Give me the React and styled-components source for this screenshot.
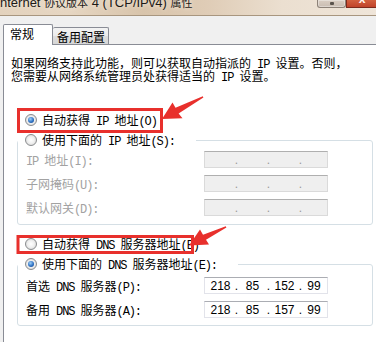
import React from "react";
import styled, { createGlobalStyle } from "styled-components";

const GlobalStyle = createGlobalStyle`
  html, body {
    margin: 0;
    padding: 0;
    background: #f0f0f0;
  }
  body {
    font-family: "Noto Sans CJK SC", "Liberation Sans", sans-serif;
  }
`;

// ASCII runs are drawn in a mono face so they get the half-width look of SimSun
const splitLatin = (text) =>
  text.split(/([\x20-\x7E]+)/).map((part, i) =>
    /[\x20-\x7E]/.test(part) ? <Latin key={i}>{part}</Latin> : part
  );

const RadioButton = ({ checked, children }) => (
  <RadioLabel>
    <RadioCircle checked={checked} />
    <span>{splitLatin(children)}</span>
  </RadioLabel>
);

const IpField = ({ values = ["", "", "", ""], disabled }) => (
  <Field disabled={disabled}>
    {values.map((v, i) => (
      <React.Fragment key={i}>
        {i > 0 && <Dot>.</Dot>}
        <Octet last={i === values.length - 1}>{v}</Octet>
      </React.Fragment>
    ))}
  </Field>
);

const App = () => {
  return (
    <Window>
      <GlobalStyle />
      <TitleBar>
        <Title>
          nternet <Cjk>协议版本</Cjk> 4 (TCP/IPv4) <Cjk>属性</Cjk>
        </Title>
        <Caption>
          <CaptionButton>
            <MaxGlyph />
          </CaptionButton>
          <CloseButton>
            <CloseGlyph>x</CloseGlyph>
          </CloseButton>
        </Caption>
      </TitleBar>

      <TabBar>
        <Tab active>常规</Tab>
        <Tab>备用配置</Tab>
      </TabBar>

      <Panel>
        <Intro>
          <IntroLine>{splitLatin("如果网络支持此功能，则可以获取自动指派的 IP 设置。否则，")}</IntroLine>
          <IntroLine>{splitLatin("您需要从网络系统管理员处获得适当的 IP 设置。")}</IntroLine>
        </Intro>

        <Body>
          <RadioRow first>
            <RadioButton checked>自动获得 IP 地址(O)</RadioButton>
          </RadioRow>

          <Group>
            <Legend width={178}>
              <RadioButton>使用下面的 IP 地址(S):</RadioButton>
            </Legend>
            <FieldGrid top={4} bottom={8}>
              <FieldLabel disabled>{splitLatin("IP 地址(I):")}</FieldLabel>
              <IpField disabled />
              <FieldLabel disabled>{splitLatin("子网掩码(U):")}</FieldLabel>
              <IpField disabled />
              <FieldLabel disabled>{splitLatin("默认网关(D):")}</FieldLabel>
              <IpField disabled />
            </FieldGrid>
          </Group>

          <RadioRow>
            <RadioButton>自动获得 DNS 服务器地址(B)</RadioButton>
          </RadioRow>

          <Group>
            <Legend width={220}>
              <RadioButton checked>使用下面的 DNS 服务器地址(E):</RadioButton>
            </Legend>
            <FieldGrid top={6} bottom={7}>
              <FieldLabel>{splitLatin("首选 DNS 服务器(P):")}</FieldLabel>
              <IpField values={["218", "85", "152", "99"]} />
              <FieldLabel>{splitLatin("备用 DNS 服务器(A):")}</FieldLabel>
              <IpField values={["218", "85", "157", "99"]} />
            </FieldGrid>
          </Group>
        </Body>
      </Panel>

      <Annotations width="376" height="342" viewBox="0 0 376 342">
        <rect x="18.5" y="109.5" width="143" height="22" fill="none" stroke="#e8302c" strokeWidth="3" />
        <polygon
          points="162,119 172.5,102.5 175.5,107.8 202.8,96.2 203.4,97.4 178.6,113.4 182.5,118.3"
          fill="#e8302c"
        />
        <rect x="18" y="236.5" width="174.5" height="16" fill="none" stroke="#e8302c" strokeWidth="3" />
        <polygon
          points="189,245.5 200,229.6 203,234.8 225.8,226.2 226.4,227.4 206,239.8 209,244.6"
          fill="#e8302c"
        />
      </Annotations>
    </Window>
  );
};

export default App;

const Window = styled.div`
  position: relative;
  width: 376px;
  height: 342px;
  overflow: hidden;
  display: flex;
  flex-direction: column;
  background: #f0f0f0;
  font-size: 12px;
  color: #000;
`;

const TitleBar = styled.div`
  flex: none;
  height: 15px;
  display: flex;
  justify-content: space-between;
  align-items: flex-start;
  overflow: hidden;
  border-bottom: 1px solid #a8967f;
  background: linear-gradient(
    90deg,
    #e3d2bd 0%,
    #e6d6c2 18%,
    #d8c4ab 38%,
    #dfccb6 55%,
    #ebdfd0 75%,
    #efe5d9 100%
  );
`;

const Title = styled.div`
  margin-top: -5px;
  font-family: "Liberation Sans", sans-serif;
  font-size: 13px;
  line-height: 16px;
  white-space: nowrap;
  color: #1c1a18;
  text-shadow: 0 0 4px rgba(255, 250, 240, 0.9);
`;

const Cjk = styled.span`
  font-family: "Noto Sans CJK SC", sans-serif;
  font-size: 11px;
  line-height: 0;
`;

const Caption = styled.div`
  display: flex;
  margin-right: -2px;
`;

const CaptionButton = styled.div`
  width: 27px;
  height: 7px;
  display: flex;
  justify-content: center;
  border: 1px solid #8d8278;
  border-top: none;
  border-radius: 0 0 3px 3px;
  background: linear-gradient(#d9cdc2, #c9bdb2);
  box-shadow: inset 0 0 0 1px rgba(255, 255, 255, 0.35);
`;

const MaxGlyph = styled.span`
  width: 4px;
  height: 3px;
  margin-top: 2px;
  background: #5a534d;
  border-radius: 1px;
`;

const CloseButton = styled.div`
  width: 30px;
  height: 7px;
  display: flex;
  justify-content: center;
  overflow: hidden;
  border: 1px solid #7d2a1c;
  border-top: none;
  border-radius: 0 0 3px 0;
  background: linear-gradient(#d2603f, #c0432a);
`;

const CloseGlyph = styled.span`
  margin-top: -8px;
  font-family: "Liberation Sans", sans-serif;
  font-weight: bold;
  font-size: 12px;
  color: #fff3ee;
`;

const TabBar = styled.div`
  flex: none;
  height: 28px;
  display: flex;
  align-items: flex-end;
  padding-left: 3px;
`;

const Tab = styled.div`
  position: relative;
  z-index: 1;
  box-sizing: border-box;
  height: ${(p) => (p.active ? 21 : 17)}px;
  width: ${(p) => (p.active ? 50 : 56)}px;
  margin-bottom: ${(p) => (p.active ? -1 : 0)}px;
  padding: 2px 0 0 ${(p) => (p.active ? 6 : 4)}px;
  line-height: 14px;
  border: 1px solid #898c95;
  border-bottom: none;
  border-left: ${(p) => (p.active ? "1px solid #898c95" : "none")};
  border-radius: 2px 2px 0 0;
  background: ${(p) =>
    p.active
      ? "#ffffff"
      : "linear-gradient(#f3f3f3, #ebebeb 50%, #dedede 51%, #d6d6d6)"};
`;

const Panel = styled.div`
  flex: 1;
  margin: 0 -4px 0 3px;
  padding: 11px 0 0 7px;
  background: #fff;
  border: 1px solid #898c95;
  border-bottom: none;
`;

const Intro = styled.div`
  display: flex;
  flex-direction: column;
`;

const IntroLine = styled.span`
  height: 13px;
  line-height: 13px;
  white-space: nowrap;
`;

const Latin = styled.span`
  font-family: "Liberation Mono", monospace;
  font-size: 12px;
  line-height: 0;
  letter-spacing: -1.1px;
`;

const Body = styled.div`
  margin-left: 6px;
  width: 356px;
  display: flex;
  flex-direction: column;
`;

const RadioRow = styled.div`
  height: 14px;
  margin-top: ${(p) => (p.first ? 31 : 12)}px;
  padding-left: 8px;
  display: flex;
  align-items: center;
`;

const RadioLabel = styled.label`
  display: flex;
  align-items: center;
  gap: 5px;
  height: 14px;
  line-height: 14px;
  white-space: nowrap;
`;

const RadioCircle = styled.span`
  flex: none;
  box-sizing: border-box;
  width: 12px;
  height: 12px;
  border-radius: 50%;
  border: 1px solid #8a8c8e;
  background: radial-gradient(circle at 50% 50%, #ffffff 0, #f1f1f1 45%, #cdcdcd 100%);
  display: flex;
  align-items: center;
  justify-content: center;
  &::after {
    content: "";
    display: ${(p) => (p.checked ? "block" : "none")};
    width: 6px;
    height: 6px;
    border-radius: 50%;
    background: radial-gradient(circle at 40% 35%, #9fd0f7 0, #2f72c4 55%, #123f7e 100%);
  }
`;

const Group = styled.fieldset`
  margin: 6px 0 0;
  padding: 0;
  min-width: 0;
  border: 1px solid #d5dfe5;
  border-radius: 3px;
`;

const Legend = styled.legend`
  box-sizing: border-box;
  width: ${(p) => p.width}px;
  height: 14px;
  padding: 0 0 0 7px;
  background: #fff;
`;

const FieldGrid = styled.div`
  display: grid;
  grid-template-columns: 178px 124px;
  grid-auto-rows: 17px;
  row-gap: 7px;
  align-items: center;
  padding: ${(p) => p.top}px 0 ${(p) => p.bottom}px 8px;
`;

const FieldLabel = styled.span`
  height: 14px;
  line-height: 14px;
  white-space: nowrap;
  color: ${(p) => (p.disabled ? "#a2a2a2" : "#000")};
`;

const Field = styled.div`
  box-sizing: border-box;
  height: 17px;
  display: flex;
  align-items: center;
  font-family: "Liberation Sans", sans-serif;
  font-size: 12px;
  color: ${(p) => (p.disabled ? "#9a9a9a" : "#000")};
  background: ${(p) => (p.disabled ? "#efefef" : "#fff")};
  border: 1px solid ${(p) => (p.disabled ? "#dadada" : "#e2e3ea")};
  border-top-color: ${(p) => (p.disabled ? "#afafaf" : "#abadb3")};
`;

const Octet = styled.span`
  width: ${(p) => (p.last ? "auto" : "31px")};
  flex: ${(p) => (p.last ? 1 : "none")};
  text-align: center;
`;

const Dot = styled.span`
  width: 1px;
  display: flex;
  justify-content: center;
  overflow: visible;
`;

const Annotations = styled.svg`
  position: absolute;
  top: 0;
  left: 0;
  pointer-events: none;
`;
